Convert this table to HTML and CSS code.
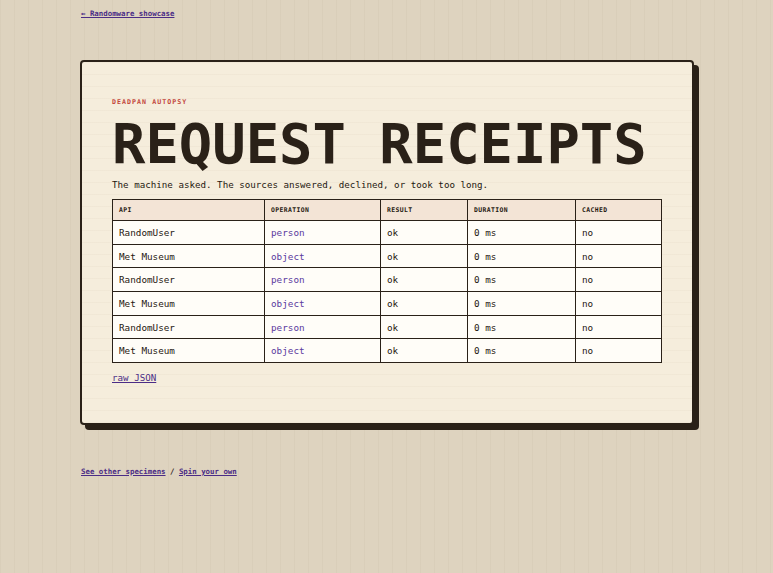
FILE: index.html
```html
<!DOCTYPE html>
<html lang="en">
<head>
<meta charset="utf-8">
<title>Request Receipts</title>
<link rel="stylesheet" href="styles.css">
</head>
<body>
<div class="page">
  <nav class="topnav"><a href="#">← Randomware showcase</a></nav>
  <main class="card">
    <div class="kicker">DEADPAN AUTOPSY</div>
    <h1 class="title">REQUEST RECEIPTS</h1>
    <p class="lede">The machine asked. The sources answered, declined, or took too long.</p>
    <table class="receipts">
      <thead>
        <tr><th class="c-api">API</th><th class="c-op">OPERATION</th><th class="c-res">RESULT</th><th class="c-dur">DURATION</th><th class="c-cache">CACHED</th></tr>
      </thead>
      <tbody>
        <tr><td>RandomUser</td><td class="op">person</td><td>ok</td><td>0 ms</td><td>no</td></tr>
        <tr><td>Met Museum</td><td class="op">object</td><td>ok</td><td>0 ms</td><td>no</td></tr>
        <tr><td>RandomUser</td><td class="op">person</td><td>ok</td><td>0 ms</td><td>no</td></tr>
        <tr><td>Met Museum</td><td class="op">object</td><td>ok</td><td>0 ms</td><td>no</td></tr>
        <tr><td>RandomUser</td><td class="op">person</td><td>ok</td><td>0 ms</td><td>no</td></tr>
        <tr><td>Met Museum</td><td class="op">object</td><td>ok</td><td>0 ms</td><td>no</td></tr>
      </tbody>
    </table>
    <a class="raw" href="#">raw JSON</a>
  </main>
  <footer class="foot"><a href="#">See other specimens</a> / <a href="#">Spin your own</a></footer>
</div>
</body>
</html>
```

FILE: styles.css
```css
html, body {
  margin: 0;
  padding: 0;
}
body {
  background-color: #ded3bf;
  background-image: repeating-linear-gradient(90deg, rgba(90, 70, 40, 0.035) 0 1px, transparent 1px 14px);
  font-family: "DejaVu Sans Mono", "Liberation Mono", monospace;
  color: #2a2118;
  min-height: 573px;
}
a {
  color: #4b2c86;
}
.page {
  width: 614px;
  margin-left: 80px;
}
.topnav {
  padding-top: 9px;
  height: 60px;
  box-sizing: border-box;
  font-size: 7.4px;
  line-height: 10px;
  font-weight: bold;
  padding-left: 1px;
}
.card {
  display: block;
  background-color: #f5eddc;
  background-image: repeating-linear-gradient(180deg, rgba(120, 90, 50, 0.035) 0 1px, transparent 1px 12px);
  border: 2px solid #2a2118;
  border-radius: 4px;
  box-shadow: 5px 5px 0 #2a2118;
  padding: 36px 30px 38px;
  height: 365px;
  box-sizing: border-box;
}
.kicker {
  font-size: 6.6px;
  line-height: 8px;
  font-weight: bold;
  letter-spacing: 1.05px;
  color: #c2453a;
}
.title {
  margin: 10px 0 0;
  font-size: 55.5px;
  line-height: 55px;
  font-weight: bold;
  letter-spacing: 0;
  color: #2a2118;
}
.lede {
  margin: 8px 0 0;
  font-size: 9.2px;
  line-height: 12px;
  color: #1f1810;
}
.receipts {
  margin-top: 8px;
  width: 550px;
  border-collapse: collapse;
  border: 1.5px solid #2a2118;
  font-size: 9.3px;
  color: #1f1810;
}
.receipts th, .receipts td {
  border: 1.5px solid #2a2118;
  text-align: left;
  padding: 0 6px;
}
.receipts th {
  background: #f3e4d6;
  font-size: 6.4px;
  font-weight: bold;
  letter-spacing: 0.4px;
  height: 20px;
}
.receipts td {
  background: #fffdf8;
  height: 22.7px;
}
.c-api { width: 139px; }
.c-op { width: 103px; }
.c-res { width: 74px; }
.c-dur { width: 95px; }
.receipts td.op {
  color: #5b3a9e;
}
.raw {
  display: inline-block;
  margin-top: 9px;
  font-size: 9.2px;
  line-height: 12px;
}
.foot {
  margin-top: 42px;
  padding-left: 1px;
  font-size: 7.4px;
  line-height: 10px;
  font-weight: bold;
}
.foot a {
  font-weight: bold;
}
```
